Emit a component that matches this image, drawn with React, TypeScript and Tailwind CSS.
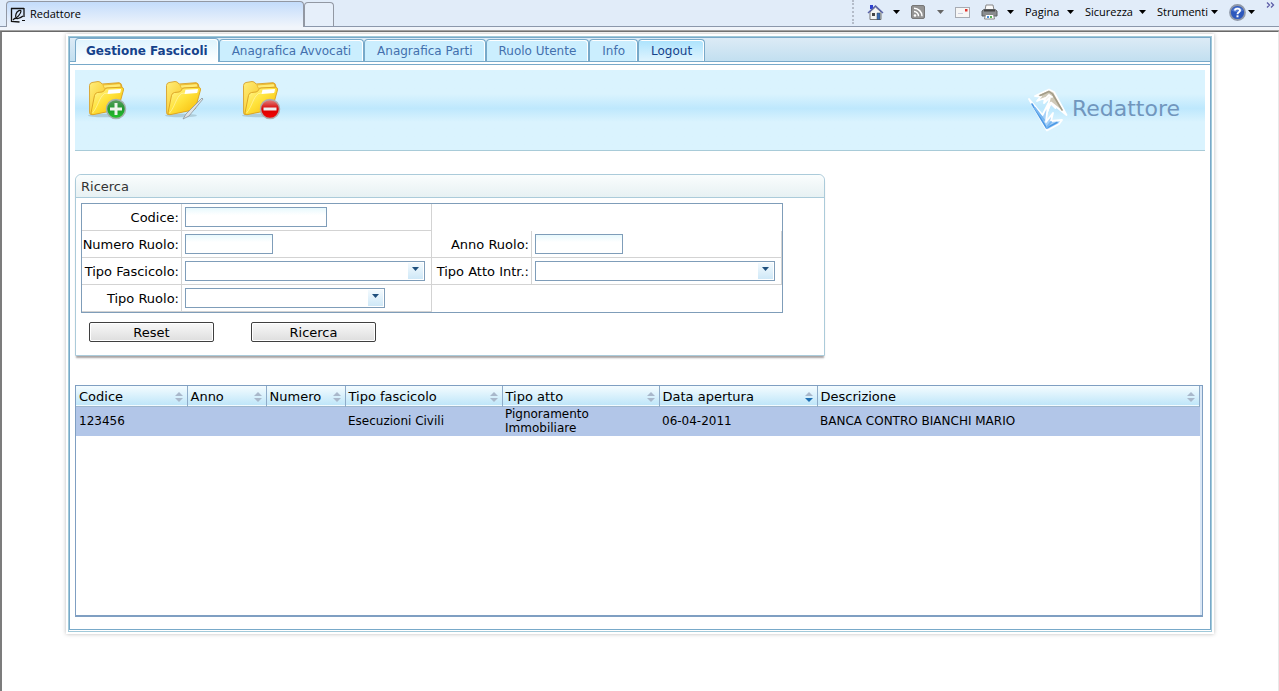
import { useState } from 'react';
import type { ReactNode } from 'react';
import clsx from 'clsx';

interface Column {
  label: string;
  width: string;
  sorted?: boolean;
}

const TABS = ['Gestione Fascicoli', 'Anagrafica Avvocati', 'Anagrafica Parti', 'Ruolo Utente', 'Info', 'Logout'];

const COLUMNS: Column[] = [
  { label: 'Codice', width: 'w-[111px]' },
  { label: 'Anno', width: 'w-[79px]' },
  { label: 'Numero', width: 'w-[79px]' },
  { label: 'Tipo fascicolo', width: 'w-[157px]' },
  { label: 'Tipo atto', width: 'w-[157px]' },
  { label: 'Data apertura', width: 'w-[158px]', sorted: true },
  { label: 'Descrizione', width: '' },
];

const ROWS = [
  ['123456', '', '', 'Esecuzioni Civili', 'Pignoramento Immobiliare', '06-04-2011', 'BANCA CONTRO BIANCHI MARIO'],
];

function Caret({ className = 'text-black' }: { className?: string }) {
  return (
    <svg width="7" height="4" viewBox="0 0 7 4" className={clsx('shrink-0', className)} fill="currentColor">
      <path d="M0 0h7L3.5 4z" />
    </svg>
  );
}

function FaviconIcon() {
  return (
    <svg width="16" height="16" viewBox="0 0 16 16" fill="none" stroke="#111">
      <path d="M1 1.500h13M1.500 1v13.500l8 .5M14 1v9" strokeWidth="1.300" />
      <path d="M3 12.500c4-1 8-6 8-8.500 0-1.500-4-.5-5 3s0 5 2 4.500 3.500-1 5-2.500M5 11l-2 2M12 13.500h3" strokeWidth="1.200" />
    </svg>
  );
}

function HomeIcon() {
  return (
    <svg width="17" height="17" viewBox="0 0 17 17">
      <path d="M3 1h3v4H3z" fill="#2b3fd0" />
      <path d="M3 8l5.500-5L14 8v7.500H3z" fill="#f4f4f4" stroke="#777" />
      <path d="M1 9l7.500-7L16 9" fill="none" stroke="#5a64a8" strokeWidth="1.500" />
      <path d="M5 9h3v3H5z" fill="#444" />
      <path d="M10 9h3v6.500h-3z" fill="#3d6cb4" stroke="#345" strokeWidth=".5" />
    </svg>
  );
}

function FeedIcon() {
  return (
    <svg width="14" height="14" viewBox="0 0 14 14">
      <rect x=".5" y=".5" width="13" height="13" rx="1.500" fill="#949494" stroke="#777" />
      <circle cx="4" cy="10.500" r="1.300" fill="#fff" />
      <path d="M3 6.500a4.500 4.500 0 0 1 4.500 4.800M3 3.300a8 8 0 0 1 8 8" fill="none" stroke="#fff" strokeWidth="1.500" />
    </svg>
  );
}

function MailIcon() {
  return (
    <svg width="15" height="11" viewBox="0 0 15 11">
      <rect x=".5" y=".5" width="14" height="10" fill="#f6f6f6" stroke="#a7abb3" />
      <path d="M10 2h2.500v2.500H10z" fill="#e0322c" />
      <path d="M3 6.500h5" stroke="#ccd" />
    </svg>
  );
}

function PrinterIcon() {
  return (
    <svg width="17" height="16" viewBox="0 0 17 16">
      <path d="M5 1h7l1 5H4z" fill="#fafafa" stroke="#888" />
      <path d="M1 7l2-1.500h11L16 7v5H1z" fill="#8a8d90" stroke="#5b5e61" />
      <path d="M3 6h11v1.500H3z" fill="#444" />
      <path d="M4.500 10.500h8l1 4.500h-10z" fill="#fff" stroke="#888" />
      <path d="M6 12h2v2H6z" fill="#4a90d9" />
      <path d="M9 12h2v2H9z" fill="#59b557" />
    </svg>
  );
}

function HelpIcon() {
  return (
    <svg width="17" height="17" viewBox="0 0 17 17">
      <circle cx="8.500" cy="8.500" r="7.500" fill="#2d58bd" stroke="#8f98a8" strokeWidth="1.800" />
      <path d="M3 6.500a6 6 0 0 1 11 0C11 8.500 6 8.500 3 6.500z" fill="#6f95e0" opacity=".6" />
      <path d="M6 6.500C6 4 11 4 11 6.500c0 1.800-2.500 1.800-2.500 3.700" fill="none" stroke="#fff" strokeWidth="1.900" />
      <path d="M7.500 11.300h2v2h-2z" fill="#fff" />
    </svg>
  );
}

function FolderIcon({ children }: { children?: ReactNode }) {
  return (
    <svg width="40" height="40" viewBox="0 0 40 40">
      <defs>
        <linearGradient id="folderBack" x1="0" y1="0" x2="1" y2="0.6">
          <stop offset="0" stopColor="#ffee7c" />
          <stop offset=".4" stopColor="#fbd84a" />
          <stop offset="1" stopColor="#eda800" />
        </linearGradient>
        <linearGradient id="folderFront" x1="0" y1="0" x2="1" y2="1">
          <stop offset="0" stopColor="#fff6a0" />
          <stop offset=".45" stopColor="#ffe33c" />
          <stop offset="1" stopColor="#f6b400" />
        </linearGradient>
        <linearGradient id="badgeGreen" x1="0" y1="0" x2="0" y2="1">
          <stop offset="0" stopColor="#5f9a66" />
          <stop offset=".5" stopColor="#1e9a2c" />
          <stop offset="1" stopColor="#25c52c" />
        </linearGradient>
        <linearGradient id="badgeRed" x1="0" y1="0" x2="0" y2="1">
          <stop offset="0" stopColor="#e08a86" />
          <stop offset=".5" stopColor="#d90000" />
          <stop offset="1" stopColor="#f40505" />
        </linearGradient>
      </defs>
      <ellipse cx="17" cy="35.500" rx="16" ry="1.800" fill="#6b8590" opacity=".3" />
      <path
        d="M2.500 5.500Q2.600 3 5 2.500L11 1.500Q13.500 1.300 15 4L32 2.700Q34.500 3 34.800 6L35 10 31 29 4 34.500Q2.500 34.500 2.600 32z"
        fill="url(#folderBack)"
        stroke="#d8a02a"
        strokeWidth=".9"
      />
      <path d="M16 5l17-1.300 1.300 3.500-17 1z" fill="#ffec78" stroke="#dfa51c" strokeWidth=".6" />
      <path
        d="M4 33L7.500 15.500Q8 13 10.500 12.500L15 12Q17 11.500 17.500 10 18.200 8.200 20 8L34.500 7.200Q37 7.500 36.500 10L31.500 28Q31 29.500 29 30L6 34.700Q3.600 35 4 33z"
        fill="url(#folderFront)"
        stroke="#d9a020"
        strokeWidth=".9"
      />
      <path d="M5.500 33c6-7 6-15 12-19.500l17-2.500" fill="none" stroke="#fffbd0" opacity=".5" />
      <path d="M21.500 9.800L34 9l-.8 4-12.700.9z" fill="#fff" />
      {children}
    </svg>
  );
}

function LogoMark() {
  return (
    <svg width="40" height="44" viewBox="0 0 40 44" strokeLinejoin="round" strokeLinecap="round">
      <path d="M7 8L21 1.500 26 4 38.500 27 23 14.500 18 27 22 9 16 15 17 10 9 13 13 8.500z" fill="#cfc9b8" stroke="#fff" strokeWidth="1.800" />
      <path d="M12 7.500L21 3.500 24.500 6 34 22" fill="none" stroke="#a39c88" strokeWidth="1.500" />
      <path d="M17 11l4-4 3 2M18 27l4.500-12 5 5" fill="none" stroke="#fff" strokeWidth="1.800" />
      <path d="M1 11L14.500 27 20 16 18 34 25 25 23 33 34 32 31 36 19 42.500z" fill="#a8d2f8" stroke="#fff" strokeWidth="1.800" />
      <path d="M4 16L18.500 40 29 34.500" fill="none" stroke="#4d9ae6" strokeWidth="1.600" />
      <path d="M7 20l9 12M19 39l4-5" fill="none" stroke="#79b7f1" strokeWidth="2" />
    </svg>
  );
}

function SortIcon({ sorted }: { sorted?: boolean }) {
  return (
    <svg width="8" height="10" viewBox="0 0 8 10" className="shrink-0" fill="#a9b8cb">
      <path d="M0 4h8L4 0z" />
      <path d="M0 6h8L4 10z" fill={sorted ? '#1f6fb2' : '#a9b8cb'} />
    </svg>
  );
}

function BrowserBar() {
  return (
    <header className="border-b border-[#a3a3a3] bg-[#f1f5fb] pb-[3px] font-['Open_Sans','Noto_Sans',sans-serif] text-[11px] text-black">
      <div className="flex h-[27px] items-end border-b border-[#8b97ab] bg-[#e1ecf9]">
        <a
          href="#"
          className="-mb-px ml-1.5 flex h-[26px] w-[298px] items-center gap-1 rounded-t border border-b-0 border-[#9298a3] bg-linear-to-b from-[#c3dcfb] to-[#f1f5fb] pl-[3px]"
        >
          <FaviconIcon />
          Redattore
        </a>
        <button aria-label="Nuova scheda" className="h-6 w-[30px] rounded-t border border-b-0 border-[#9298a3] bg-[#e6effa]" />
        <nav className="ml-auto flex h-[26px] w-[427px] shrink-0 items-center gap-[11px] pb-0.5">
          <span className="mr-0.5 h-6 w-px border-l-2 border-dotted border-[#b4bcc9]" />
          <button aria-label="Pagina iniziale" className="flex w-[33px] items-center justify-between">
            <HomeIcon />
            <Caret />
          </button>
          <button aria-label="Feed" className="flex w-[33px] items-center justify-between">
            <FeedIcon />
            <Caret className="text-[#666]" />
          </button>
          <button aria-label="Posta" className="w-[15px]">
            <MailIcon />
          </button>
          <button aria-label="Stampa" className="flex w-[33px] items-center justify-between">
            <PrinterIcon />
            <Caret />
          </button>
          <button className="flex w-[49px] items-center justify-between">
            Pagina
            <Caret />
          </button>
          <button className="flex w-[61px] items-center justify-between">
            Sicurezza
            <Caret />
          </button>
          <button className="flex w-[61px] items-center justify-between">
            Strumenti
            <Caret />
          </button>
          <button aria-label="Guida" className="flex w-[26px] items-center justify-between">
            <HelpIcon />
            <Caret />
          </button>
          <button aria-label="Altri comandi" className="self-start pt-0.5">
            <svg width="9" height="6" viewBox="0 0 9 6" fill="none" stroke="#5d5da8" strokeWidth="1.300">
              <path d="M1 .5L3.500 3 1 5.500M5 .5L7.500 3 5 5.500" />
            </svg>
          </button>
        </nav>
      </div>
    </header>
  );
}

function Field({ label, htmlFor, children }: { label: string; htmlFor: string; children: ReactNode }) {
  return (
    <>
      <label htmlFor={htmlFor} className="border-r border-b border-[#d3d3d3] pr-0.5 text-right leading-7 whitespace-nowrap">
        {label}
      </label>
      <div className="border-r border-b border-[#d3d3d3] px-[3px] pt-[3px]">{children}</div>
    </>
  );
}

function TextInput({ id, className }: { id: string; className: string }) {
  return (
    <input
      id={id}
      type="text"
      className={clsx('block h-5 border border-[#7f9db9] bg-linear-to-b from-[#e8f9fd] to-white to-40% px-1', className)}
    />
  );
}

function SelectInput({ id, className }: { id: string; className: string }) {
  return (
    <div className={clsx('relative h-5', className)}>
      <select id={id} className="block h-5 w-full appearance-none border border-[#7f9db9] bg-white px-1">
        <option value=""></option>
      </select>
      <span className="pointer-events-none absolute inset-y-0.5 right-0.5 flex w-[15px] justify-center bg-linear-to-b from-[#f3fafe] to-[#cfe8f7] pt-1">
        <Caret className="text-[#1f4f7d]" />
      </span>
    </div>
  );
}

function SearchPanel() {
  const button =
    'h-5 w-[125px] rounded-xs border border-[#3f3f3f] bg-linear-to-b from-[#f8f8f8] to-[#dedede] text-black shadow-[inset_0_0_0_1px_#fff]';

  return (
    <form
      onSubmit={(e) => e.preventDefault()}
      className="w-[750px] max-w-full rounded-t-md border border-[#abcbda] bg-white shadow-[0_3px_2px_-1px_#a8a3a3]"
    >
      <h2 className="h-[23px] rounded-t-md border-b border-[#abcbda] bg-linear-to-b from-[#fafdfd] to-[#e7f1f3] px-[5px] leading-[23px] text-[#333]">
        Ricerca
      </h2>
      <div className="px-[5px] pt-[5px] pb-[13px]">
        <div className="grid w-[702px] auto-rows-[27px] grid-cols-[100px_250px_100px_250px] border border-[#7f9db9]">
          <Field label="Codice:" htmlFor="codice">
            <TextInput id="codice" className="w-[142px]" />
          </Field>
          <div className="col-span-2" />
          <Field label="Numero Ruolo:" htmlFor="numeroRuolo">
            <TextInput id="numeroRuolo" className="w-[88px]" />
          </Field>
          <Field label="Anno Ruolo:" htmlFor="annoRuolo">
            <TextInput id="annoRuolo" className="w-[88px]" />
          </Field>
          <Field label="Tipo Fascicolo:" htmlFor="tipoFascicolo">
            <SelectInput id="tipoFascicolo" className="w-[240px]" />
          </Field>
          <Field label="Tipo Atto Intr.:" htmlFor="tipoAtto">
            <SelectInput id="tipoAtto" className="w-[240px]" />
          </Field>
          <Field label="Tipo Ruolo:" htmlFor="tipoRuolo">
            <SelectInput id="tipoRuolo" className="w-[200px]" />
          </Field>
        </div>
        <div className="mt-[9px] ml-2 flex gap-[37px]">
          <button type="reset" className={button}>
            Reset
          </button>
          <button type="submit" className={button}>
            Ricerca
          </button>
        </div>
      </div>
    </form>
  );
}

function ResultsTable() {
  return (
    <div className="mr-[2px] flex min-h-[232px] border border-b-2 border-[#7f9fc2]">
      <div className="flex-1 bg-white">
        <table className="w-full table-fixed border-collapse">
          <thead>
            <tr className="h-5 border-b border-[#9db6cd] bg-linear-to-b from-[#f4fcff] to-[#bfe6f9]">
              {COLUMNS.map((col) => (
                <th key={col.label} className={clsx('border-r border-[#8eabc8] p-0 text-left font-normal', col.width)}>
                  <button className="flex h-[19px] w-full items-center justify-between pt-0.5 pr-1 pl-[3px]">
                    {col.label}
                    <SortIcon sorted={col.sorted} />
                  </button>
                </th>
              ))}
            </tr>
          </thead>
          <tbody>
            {ROWS.map((row) => (
              <tr key={row[0]} className="h-[30px] bg-[#b2c6e8]">
                {row.map((cell, i) => (
                  <td key={i} className="py-0 pr-6 pl-[3px] text-xs leading-[14px]">
                    {cell}
                  </td>
                ))}
              </tr>
            ))}
          </tbody>
        </table>
      </div>
      <div className="w-0.5 bg-[#dbe7f5]" />
    </div>
  );
}

export default function App() {
  const [active, setActive] = useState(TABS[0]);

  return (
    <div className="flex min-h-screen flex-col bg-white font-['DejaVu_Sans',Verdana,sans-serif] text-[13px] text-black">
      <BrowserBar />
      <div className="flex-1 border-t border-r border-l-2 border-t-[#696969] border-r-[#e8e8e8] border-l-[#7c7c7c]">
        <main className="mx-16 mt-0.5 bg-white p-0.5 shadow-[0_0_4px_#bbb]">
          <div className="border border-[#a0c9d9] pb-px">
            <div className="border border-[#78a9c9]">
              <nav className="flex h-6 items-end border-b border-[#78a9c9] bg-linear-to-b from-[#dcebf6] to-[#c2dff0] pl-[5px] text-xs leading-[22px]">
                {TABS.map((tab) => (
                  <button
                    key={tab}
                    onClick={() => setActive(tab)}
                    className={clsx(
                      'shrink-0 rounded-t border border-b-0 border-[#78a9c9] whitespace-nowrap shadow-[inset_-1px_1px_0_#fff]',
                      tab === active && '-mb-px h-6 bg-linear-to-b from-[#def4fe] to-white px-2.5 font-bold text-[#15428b]',
                      tab !== active && tab !== 'Logout' && 'h-[22px] bg-[#cbeefe] px-3 text-[#4370ad]',
                      tab !== active && tab === 'Logout' && 'h-[22px] bg-linear-to-b from-[#abe3fd] to-[#dff4fe] px-3 text-[#15428b]'
                    )}
                  >
                    {tab}
                  </button>
                ))}
              </nav>
              <div className="h-0.5 bg-white" />
              <div className="border-t border-[#78a9c9] px-[5px] pt-[5px] pb-3">
                <div className="flex h-[81px] items-start border-b border-[#a8cbd8] bg-linear-to-b from-[#daf3fe] from-30% via-[#bee8fd] via-48% to-[#daf3fe] to-65% pt-2.5 pr-[25px] pl-3">
                  <div className="flex gap-[37px]">
                    <button aria-label="Nuovo fascicolo">
                      <FolderIcon>
                        <circle cx="29" cy="29" r="9.500" fill="url(#badgeGreen)" stroke="#a5b0ae" strokeWidth="1.500" />
                        <path d="M27.500 23h3v4.500H35v3h-4.500V35h-3v-4.500H23v-3h4.500z" fill="#f0f4ee" />
                      </FolderIcon>
                    </button>
                    <button aria-label="Modifica fascicolo">
                      <FolderIcon>
                        <path d="M38 18l1 1-14 17-6 3 3-5z" fill="#dfe3e6" stroke="#8d979d" strokeWidth=".8" />
                      </FolderIcon>
                    </button>
                    <button aria-label="Elimina fascicolo">
                      <FolderIcon>
                        <circle cx="29" cy="29" r="9.500" fill="url(#badgeRed)" stroke="#b0aaaa" strokeWidth="1.500" />
                        <path d="M22.500 27.500h13v3h-13z" fill="#eee" />
                      </FolderIcon>
                    </button>
                  </div>
                  <div className="mt-2 ml-auto flex items-center gap-1 text-[22px] text-[#7196bd]">
                    <LogoMark />
                    <h1 className="-mt-1">Redattore</h1>
                  </div>
                </div>
                <div className="mt-[23px]">
                  <SearchPanel />
                </div>
                <div className="mt-[29px]">
                  <ResultsTable />
                </div>
              </div>
            </div>
          </div>
        </main>
      </div>
    </div>
  );
}
